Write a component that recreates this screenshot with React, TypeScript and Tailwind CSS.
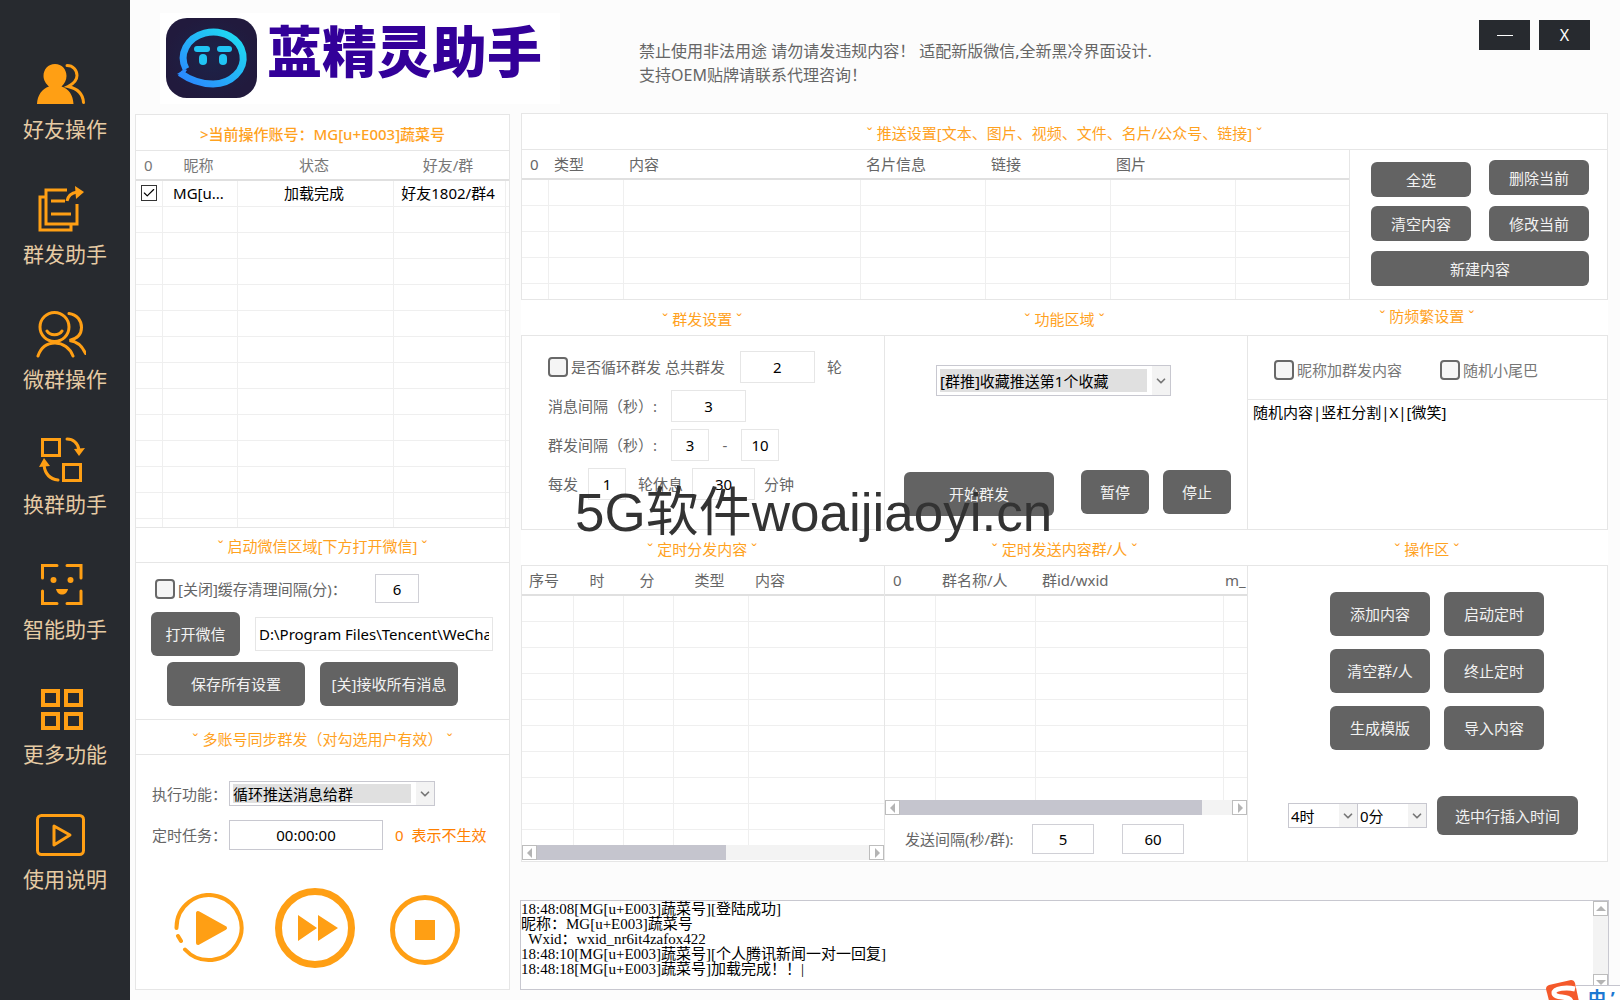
import React from "react";
import { Check, ChevronDown } from "lucide-react";

const NAV_ITEMS = [
  { label: "好友操作", icon: "friends" },
  { label: "群发助手", icon: "share" },
  { label: "微群操作", icon: "group" },
  { label: "换群助手", icon: "swap" },
  { label: "智能助手", icon: "smart" },
  { label: "更多功能", icon: "more" },
  { label: "使用说明", icon: "guide" },
];

const LOG_TEXT = [
  "18:48:08[MG[u+E003]蔬菜号][登陆成功]",
  "昵称：MG[u+E003]蔬菜号",
  "  Wxid：wxid_nr6it4zafox422",
  "18:48:10[MG[u+E003]蔬菜号][个人腾讯新闻一对一回复]",
  "18:48:18[MG[u+E003]蔬菜号]加载完成！！|",
].join("\n");

function NavIcon({ name }: { name: string }) {
  return (
    <svg
      width="50"
      height="48"
      viewBox="0 0 50 48"
      fill="none"
      stroke="#ff9f14"
      strokeWidth="3"
      strokeLinecap="round"
      aria-hidden="true"
    >
      {name === "friends" && (
        <>
          <path
            fill="#ff9f14"
            stroke="none"
            d="M19 3c7 0 11.500 5.500 11.500 12 0 4-2 8-5 10.500C33 28 37 34 37.500 43H1c.5-9 5-15 12-17.500C10 23 7.500 19 7.500 15 7.500 8.500 12 3 19 3Z"
          />
          <path d="M31 4.500c6 0 10 4.500 10 10 0 4.500-3 8-9 11 9 2 15 7 15.500 16" />
        </>
      )}
      {name === "share" && (
        <>
          <path strokeLinecap="butt" d="M31 4H10v34h31V18M10 11H4v33h31v-6M15 15h14M15 28h20" />
          <path strokeLinecap="butt" d="M31 15c1-5 4-8 10-9" />
          <path fill="#ff9f14" stroke="none" d="M39 0l9 6-8 7Z" />
        </>
      )}
      {name === "group" && (
        <>
          <circle cx="18.500" cy="16" r="14.500" />
          <path d="M11 20c3 5 12 5 15 0M33 2.500c8 1 12.500 7 12.500 14 0 6-4 11-12 13 8 1 13 6 16 13M2 45c3-9 9-13 17-13s15 5 18 13" />
        </>
      )}
      {name === "swap" && (
        <>
          <path strokeLinecap="butt" d="M6.500 3.500h17v16h-17ZM27.500 28.500h17v16h-17Z" />
          <path d="M31 3c6 0 11 4 12 11M22 44C14 43 9 38 8 29" />
          <path fill="#ff9f14" stroke="none" d="M38 13l11-1-6 8ZM3 31l5-9 6 8Z" />
        </>
      )}
      {name === "smart" && (
        <>
          <path d="M21 4.500H6.500V17M31 4.500h14V17M21 42.500H6.500V30M31 42.500h14V30" />
          <circle cx="17.500" cy="19" r="3" fill="#ff9f14" stroke="none" />
          <circle cx="34.500" cy="19" r="3" fill="#ff9f14" stroke="none" />
          <path fill="#ff9f14" stroke="none" d="M20 28h12c-1 4-3 5.500-6 5.500S21 32 20 28Z" />
        </>
      )}
      {name === "more" && (
        <path
          strokeWidth="4"
          strokeLinecap="butt"
          d="M7 5h15v14H7ZM30 5h15v14H30ZM7 28h15v14H7ZM30 28h15v14H30Z"
        />
      )}
      {name === "guide" && (
        <>
          <rect x="1.500" y="4.500" width="46" height="39" rx="4" />
          <path strokeLinejoin="round" d="M18 15l16 9-16 10Z" />
        </>
      )}
    </svg>
  );
}

function Logo() {
  return (
    <svg width="91" height="80" viewBox="0 0 91 80" aria-hidden="true">
      <defs>
        <linearGradient id="logo-ring" x1="0" y1="1" x2="1" y2="0">
          <stop offset="0" stopColor="#2b83ff" />
          <stop offset="1" stopColor="#1ee0f0" />
        </linearGradient>
        <radialGradient id="logo-bg">
          <stop offset="0" stopColor="#1c2349" />
          <stop offset="1" stopColor="#211a3d" />
        </radialGradient>
      </defs>
      <rect width="91" height="80" rx="21" fill="url(#logo-bg)" />
      <path
        d="M20 51A30 26 0 1 1 47 66C35 66 24 62 14 55"
        fill="none"
        stroke="url(#logo-ring)"
        strokeWidth="7"
      />
      <path d="M11 56l8-5 2 1-4 6Z" fill="#2b8dff" />
      <g fill="#20c4f4">
        <rect x="28" y="28" width="16" height="6" rx="3" />
        <rect x="51" y="28" width="15" height="6" rx="3" />
        <rect x="33" y="36" width="8" height="11" rx="4" />
        <rect x="53" y="36" width="8" height="11" rx="4" />
      </g>
    </svg>
  );
}

function Btn({ children, className = "" }: { children: React.ReactNode; className?: string }) {
  return (
    <button type="button" className={`rounded-md bg-[#636363] text-[15px] leading-5 text-[#f2f2f2] ${className}`}>
      {children}
    </button>
  );
}

function SectionTitle({ children, className = "" }: { children: React.ReactNode; className?: string }) {
  return (
    <h2 className={`flex h-9 items-center justify-center border-b border-[#e6e6e6] text-[15px] text-[#ffa21f] ${className}`}>
      {children}
    </h2>
  );
}

function TextField({ label, value, className = "" }: { label: string; value: string; className?: string }) {
  return (
    <input
      type="text"
      aria-label={label}
      defaultValue={value}
      className={`border bg-white text-[15px] text-black outline-none ${className}`}
    />
  );
}

function SelectBox({
  label,
  value,
  className = "",
  fieldClass = "",
}: {
  label: string;
  value: string;
  className?: string;
  fieldClass?: string;
}) {
  return (
    <div className={`flex border border-[#c8c8d0] bg-white ${className}`}>
      <select
        aria-label={label}
        className={`min-w-0 flex-1 appearance-none text-[15px] leading-5 text-black outline-none ${fieldClass}`}
      >
        <option>{value}</option>
      </select>
      <span className="pointer-events-none flex w-[18px] items-center justify-center bg-[#f3f3f3]">
        <ChevronDown size={14} strokeWidth={3} color="#777" />
      </span>
    </div>
  );
}

function CheckLine({ label }: { label: string }) {
  return (
    <label className="flex items-center gap-[3px] whitespace-nowrap">
      <input
        type="checkbox"
        className="h-5 w-5 shrink-0 appearance-none rounded border-2 border-[#686868] bg-[#f5f5f5]"
      />
      {label}
    </label>
  );
}

type Column = { title: string; width?: string; align?: string };

function GridTable({
  columns,
  rows,
  firstRow,
  className = "",
}: {
  columns: Column[];
  rows: number;
  firstRow?: React.ReactNode;
  className?: string;
}) {
  return (
    <table className={`w-full table-fixed border-collapse text-[15px] ${className}`}>
      <colgroup>
        {columns.map((c, i) => (
          <col key={i} className={c.width} />
        ))}
      </colgroup>
      <thead>
        <tr className="h-[29px] border-b-2 border-[#e0e0e0]">
          {columns.map((c, i) => (
            <th key={i} className={`p-0 leading-5 font-normal whitespace-nowrap ${c.align ?? "pl-2 text-left"}`}>
              {c.title}
            </th>
          ))}
        </tr>
      </thead>
      <tbody>
        {firstRow}
        {Array.from({ length: rows }, (_, r) => (
          <tr key={r} className="h-[26px] border-b border-[#efefef]">
            {columns.map((_, i) => (
              <td key={i} className="border-r border-[#efefef] p-0 last:border-r-0" />
            ))}
          </tr>
        ))}
      </tbody>
    </table>
  );
}

function Arrow({ d }: { d: string }) {
  return (
    <button type="button" aria-label="滚动" className="flex h-[15px] w-[15px] shrink-0 items-center justify-center border border-[#bdbdbd] bg-white">
      <svg width="10" height="10" viewBox="0 0 10 10" fill="#b4b4b4" aria-hidden="true">
        <path d={d} />
      </svg>
    </button>
  );
}

function HScroll({ thumb }: { thumb: string }) {
  return (
    <div className="flex h-[15px] bg-[#f3f3f3]">
      <Arrow d="M7 0v10L2 5Z" />
      <div className="flex-1">
        <div className={`h-full bg-[#c5c5ce] ${thumb}`} />
      </div>
      <Arrow d="M3 0v10l5-5Z" />
    </div>
  );
}

function Sidebar() {
  return (
    <nav className="flex w-[130px] shrink-0 flex-col gap-[25px] bg-[#272a2f] pt-[61px]">
      {NAV_ITEMS.map((item) => (
        <a key={item.label} href="#" className="flex h-[100px] flex-col">
          <span className="pl-9">
            <NavIcon name={item.icon} />
          </span>
          <span className="mt-1.5 text-center text-[21px] leading-7 text-[#e6cba4]">{item.label}</span>
        </a>
      ))}
    </nav>
  );
}

function Header() {
  return (
    <header className="flex h-[113px] items-start">
      <div className="mt-[13px] ml-[30px] flex h-[91px] w-[400px] items-start bg-white pl-1.5">
        <div className="mt-[5px]">
          <Logo />
        </div>
        <h1 className="ml-2.5 pt-2 text-[55px] leading-[60px] font-black whitespace-nowrap text-[#330099]">
          蓝精灵助手
        </h1>
      </div>
      <p className="mt-[39px] ml-[79px] text-base leading-6 whitespace-nowrap">
        禁止使用非法用途 请勿请发违规内容！ 适配新版微信,全新黑冷界面设计.
        <br />
        支持OEM贴牌请联系代理咨询！
      </p>
      <div className="mt-5 mr-[30px] ml-auto flex gap-[9px] text-base text-white">
        <button type="button" aria-label="最小化" className="flex h-[30px] w-[51px] items-center justify-center bg-[#272a2f]">
          <span className="h-px w-4 bg-white" />
        </button>
        <button type="button" className="h-[30px] w-[51px] bg-[#272a2f]">
          X
        </button>
      </div>
    </header>
  );
}

function AccountPanel() {
  return (
    <section className="mt-px flex w-[375px] shrink-0 flex-col border border-[#e6e6e6] bg-white">
      <SectionTitle className="pt-0.5 font-medium">&gt;当前操作账号：MG[u+E003]蔬菜号</SectionTitle>
      <div className="h-[376px] overflow-hidden">
        <GridTable
          className="text-[#777]"
          rows={13}
          columns={[
            { title: "0", width: "w-[26px]", align: "pl-2 text-left" },
            { title: "昵称", width: "w-[75px]", align: "pr-0.5 text-center" },
            { title: "状态", width: "w-[156px]", align: "pr-0.5 text-center" },
            { title: "好友/群", width: "w-[112px]", align: "pr-0.5 text-center" },
            { title: "" },
          ]}
          firstRow={
            <tr className="h-[26px] border-b border-[#efefef] text-black">
              <td className="border-r border-[#efefef] p-0">
                <span className="ml-[5px] grid h-4 w-4">
                  <input
                    type="checkbox"
                    aria-label="选择账号"
                    defaultChecked
                    className="col-start-1 row-start-1 h-4 w-4 appearance-none border border-[#333] bg-white"
                  />
                  <Check size={14} strokeWidth={2} className="pointer-events-none col-start-1 row-start-1 m-px" />
                </span>
              </td>
              <td className="border-r border-[#efefef] p-0 pr-0.5 text-center leading-5">MG[u...</td>
              <td className="border-r border-[#efefef] p-0 pr-0.5 text-center leading-5">加载完成</td>
              <td className="border-r border-[#efefef] p-0 pr-0.5 text-center leading-5 whitespace-nowrap">好友1802/群4</td>
              <td className="p-0" />
            </tr>
          }
        />
      </div>

      <SectionTitle className="border-t pt-0.5">ˇ 启动微信区域[下方打开微信] ˇ</SectionTitle>
      <div className="h-[156px] pt-[11px]">
        <div className="flex items-center pl-[19px]">
          <CheckLine label="[关闭]缓存清理间隔(分)：" />
          <TextField label="缓存清理间隔" value="6" className="ml-auto h-[29px] w-11 border-[#d0d0d6] text-center" />
          <span className="w-[90px]" />
        </div>
        <div className="mt-[9px] flex items-center pr-4 pl-[15px]">
          <Btn className="h-11 w-[89px]">打开微信</Btn>
          <TextField
            label="微信路径"
            value="D:\Program Files\Tencent\WeChat\WeChat.exe"
            className="ml-[15px] h-[34px] min-w-0 flex-1 border-[#e6e6e6] px-[3px]"
          />
        </div>
        <div className="mt-1.5 flex gap-[15px] pl-[31px]">
          <Btn className="h-11 w-[138px]">保存所有设置</Btn>
          <Btn className="h-11 w-[138px]">[关]接收所有消息</Btn>
        </div>
      </div>

      <SectionTitle className="border-t pt-1">ˇ 多账号同步群发（对勾选用户有效） ˇ</SectionTitle>
      <div className="flex-1 pt-[26px] pl-4">
        <div className="flex items-center">
          <span className="w-[77px]">执行功能：</span>
          <SelectBox
            label="执行功能"
            value="循环推送消息给群"
            className="h-[25px] w-[206px]"
            fieldClass="my-0.5 mr-[5px] ml-[3px] bg-[#e0e0e0]"
          />
        </div>
        <div className="mt-3.5 flex items-center">
          <span className="w-[77px]">定时任务：</span>
          <TextField label="定时任务" value="00:00:00" className="h-[30px] w-[154px] border-[#c8c8d0] text-center" />
          <span className="ml-3 text-[#ff8000]">0&nbsp; 表示不生效</span>
        </div>
        <div className="mt-[38px] flex items-center pl-[22px]">
          <button type="button" aria-label="开始">
            <svg width="70" height="70" viewBox="0 0 70 70" aria-hidden="true">
              <path
                d="M2.500 35a32.500 32.500 0 1 1 8.500 21.500M4 43l3 5"
                fill="none"
                stroke="#ff9f14"
                strokeWidth="4"
                strokeLinecap="round"
              />
              <path
                d="M24 20v30l27-15Z"
                fill="#ff9f14"
                stroke="#ff9f14"
                strokeWidth="4"
                strokeLinejoin="round"
              />
            </svg>
          </button>
          <button type="button" aria-label="快进" className="ml-[31px]">
            <svg width="80" height="80" viewBox="0 0 80 80" aria-hidden="true">
              <circle cx="40" cy="40" r="36.500" fill="none" stroke="#ff9f14" strokeWidth="7" />
              <path d="M23 27v26l19-13ZM43 27v26l20-13Z" fill="#ff9f14" />
            </svg>
          </button>
          <button type="button" aria-label="停止" className="mt-1 ml-[35px]">
            <svg width="70" height="70" viewBox="0 0 70 70" aria-hidden="true">
              <circle cx="35" cy="35" r="32.500" fill="none" stroke="#ff9f14" strokeWidth="5" />
              <path d="M25 25h20v20H25Z" fill="#ff9f14" />
            </svg>
          </button>
        </div>
      </div>
    </section>
  );
}

function PushPanel() {
  return (
    <section className="border border-[#e6e6e6] bg-white">
      <SectionTitle className="pt-0.5">ˇ 推送设置[文本、图片、视频、文件、名片/公众号、链接] ˇ</SectionTitle>
      <div className="flex h-[149px]">
        <div className="flex-1 overflow-hidden">
          <GridTable
            rows={5}
            columns={[
              { title: "0", width: "w-[26px]" },
              { title: "类型", width: "w-[75px]", align: "pl-1.5 text-left" },
              { title: "内容", width: "w-[237px]", align: "pl-1.5 text-left" },
              { title: "名片信息", width: "w-[125px]", align: "pl-1.5 text-left" },
              { title: "链接", width: "w-[125px]", align: "pl-1.5 text-left" },
              { title: "图片", width: "w-[125px]", align: "pl-1.5 text-left" },
              { title: "" },
            ]}
          />
        </div>
        <div className="w-[258px] border-l border-[#e6e6e6] pr-[18px] pl-[21px]">
          <div className="flex justify-between">
            <Btn className="mt-3 h-[35px] w-[100px]">全选</Btn>
            <Btn className="mt-2.5 h-[35px] w-[100px]">删除当前</Btn>
          </div>
          <div className="mt-[9px] flex justify-between">
            <Btn className="h-[35px] w-[100px]">清空内容</Btn>
            <Btn className="h-[35px] w-[100px]">修改当前</Btn>
          </div>
          <Btn className="mt-2.5 h-[35px] w-full">新建内容</Btn>
        </div>
      </div>
    </section>
  );
}

function SettingsRow() {
  return (
    <section className="bg-white">
      <div className="grid grid-cols-3">
        <SectionTitle className="pt-0.5">ˇ 群发设置 ˇ</SectionTitle>
        <SectionTitle className="pt-0.5">ˇ 功能区域 ˇ</SectionTitle>
        <SectionTitle className="pb-1">ˇ 防频繁设置 ˇ</SectionTitle>
      </div>
      <div className="relative grid h-[194px] grid-cols-[363fr_363fr_359fr] border-x border-b border-[#e6e6e6]">
        <div className="flex flex-col gap-[7px] border-r border-[#e6e6e6] pt-[15px] pl-[26px] whitespace-nowrap">
          <div className="flex h-8 items-center">
            <CheckLine label="是否循环群发 总共群发" />
            <TextField label="总共群发" value="2" className="mr-3 ml-[15px] h-8 w-[75px] border-[#e6e6e6] text-center" />
            轮
          </div>
          <div className="flex h-8 items-center">
            <label htmlFor="msg-gap" className="w-[123px]">
              消息间隔（秒）:
            </label>
            <input
              id="msg-gap"
              defaultValue="3"
              className="h-8 w-[75px] border border-[#e6e6e6] text-center text-black outline-none"
            />
          </div>
          <div className="flex h-8 items-center">
            <span className="w-[123px]">群发间隔（秒）:</span>
            <TextField label="群发间隔最小" value="3" className="h-8 w-[38px] border-[#e6e6e6] text-center" />
            <span className="w-8 text-center">-</span>
            <TextField label="群发间隔最大" value="10" className="h-8 w-[38px] border-[#e6e6e6] text-center" />
          </div>
          <div className="flex h-8 items-center">
            每发
            <TextField label="每发轮数" value="1" className="mr-3 ml-2.5 h-8 w-[38px] border-[#e6e6e6] text-center" />
            轮休息
            <TextField label="休息分钟" value="30" className="mx-[9px] h-8 w-[63px] border-[#e6e6e6] text-center" />
            分钟
          </div>
        </div>

        <div className="border-r border-[#e6e6e6] pt-[29px]">
          <SelectBox
            label="功能"
            value="[群推]收藏推送第1个收藏"
            className="ml-[51px] h-[31px] w-[235px]"
            fieldClass="my-[3px] mr-[5px] ml-[3px] bg-[#e0e0e0]"
          />
          <div className="mt-[74px] flex pl-[19px]">
            <Btn className="mt-0.5 h-11 w-[150px]">开始群发</Btn>
            <Btn className="ml-[27px] h-11 w-[68px]">暂停</Btn>
            <Btn className="ml-[14px] h-11 w-[68px]">停止</Btn>
          </div>
        </div>

        <div className="flex flex-col">
          <div className="flex h-16 items-center gap-[38px] border-b border-[#e6e6e6] pt-1 pl-[26px] text-[#777]">
            <CheckLine label="昵称加群发内容" />
            <CheckLine label="随机小尾巴" />
          </div>
          <textarea
            aria-label="随机内容"
            defaultValue="随机内容|竖杠分割|X|[微笑]"
            className="w-full flex-1 resize-none px-[5px] text-[15px] leading-6 text-black outline-none"
          />
        </div>

        <div className="pointer-events-none absolute top-[145px] left-[53px] text-[53px] leading-[60px] whitespace-nowrap text-[#333]">
          <span className="font-['Liberation_Sans','Noto_Sans_CJK_SC',sans-serif]">5G软件woaijiaoyi.cn</span>
        </div>
      </div>
    </section>
  );
}

function TimerRow() {
  return (
    <section className="bg-white">
      <div className="grid grid-cols-3">
        <SectionTitle className="pt-0.5">ˇ 定时分发内容 ˇ</SectionTitle>
        <SectionTitle className="pt-0.5">ˇ 定时发送内容群/人 ˇ</SectionTitle>
        <SectionTitle className="pt-0.5">ˇ 操作区 ˇ</SectionTitle>
      </div>
      <div className="grid h-[296px] grid-cols-[363fr_363fr_359fr] border-x border-b border-[#e6e6e6]">
        <div className="flex min-w-0 flex-col border-r border-[#e6e6e6]">
          <div className="h-[279px] overflow-hidden">
            <GridTable
              rows={10}
              columns={[
                { title: "序号", width: "w-[51px]", align: "pl-[7px] text-left" },
                { title: "时", width: "w-[50px]", align: "pr-0.5 text-center" },
                { title: "分", width: "w-[50px]", align: "pr-0.5 text-center" },
                { title: "类型", width: "w-[75px]", align: "pr-0.5 text-center" },
                { title: "内容", align: "pl-[7px] text-left" },
              ]}
            />
          </div>
          <HScroll thumb="w-[57%]" />
        </div>

        <div className="flex min-w-0 flex-col border-r border-[#e6e6e6]">
          <div className="h-[234px] overflow-hidden">
            <GridTable
              rows={8}
              columns={[
                { title: "0", width: "w-[50px]" },
                { title: "群名称/人", width: "w-[100px]", align: "pl-[7px] text-left" },
                { title: "群id/wxid", width: "w-[188px]", align: "pl-[7px] text-left" },
                { title: "m_", align: "pl-0.5 text-left" },
              ]}
            />
          </div>
          <HScroll thumb="w-[91%]" />
          <div className="flex flex-1 items-center pt-px pl-5">
            <span className="w-[127px]">发送间隔(秒/群):</span>
            <TextField label="发送间隔最小" value="5" className="h-[30px] w-[62px] border-[#d0d0d6] text-center" />
            <TextField label="发送间隔最大" value="60" className="ml-7 h-[30px] w-[62px] border-[#d0d0d6] text-center" />
          </div>
        </div>

        <div className="pt-[26px]">
          <div className="grid grid-cols-[100px_100px] gap-x-3.5 gap-y-[13px] pl-[82px]">
            <Btn className="h-11">添加内容</Btn>
            <Btn className="h-11">启动定时</Btn>
            <Btn className="h-11">清空群/人</Btn>
            <Btn className="h-11">终止定时</Btn>
            <Btn className="h-11">生成模版</Btn>
            <Btn className="h-11">导入内容</Btn>
          </div>
          <div className="mt-[46px] flex items-center pl-10">
            <SelectBox label="小时" value="4时" className="h-[25px] w-[70px]" fieldClass="pl-0.5" />
            <SelectBox label="分钟" value="0分" className="h-[25px] w-[69px] border-l-0" fieldClass="pl-0.5" />
            <Btn className="ml-2.5 h-[39px] w-[141px]">选中行插入时间</Btn>
          </div>
        </div>
      </div>
    </section>
  );
}

function LogPanel() {
  return (
    <section className="-mx-px mt-[38px] flex h-[90px] border border-[#c8c8d0] bg-white">
      <textarea
        aria-label="运行日志"
        readOnly
        defaultValue={LOG_TEXT}
        className="flex-1 resize-none overflow-hidden pt-px font-['Liberation_Serif','Noto_Sans_CJK_SC',serif] text-[15px] leading-[15px] whitespace-pre text-black outline-none"
      />
      <div className="flex w-[15px] flex-col justify-between bg-[#f3f3f3]">
        <Arrow d="M0 7h10L5 2Z" />
        <Arrow d="M0 3h10L5 8Z" />
      </div>
    </section>
  );
}

// input method bar, pinned to the corner of the desktop
function ImeBar() {
  return (
    <div className="absolute right-0 bottom-0 h-5 w-[74px] overflow-hidden">
      <div className="mt-[5px] ml-[30px] h-8 border-t border-[#c5c5ce] bg-white pl-3 text-[18px] leading-6 font-bold whitespace-nowrap text-[#1c78d2]">
        中 ’
      </div>
      <svg width="42" height="40" viewBox="0 0 42 40" className="absolute top-0 left-0" aria-hidden="true">
        <path d="M3 5l22-5q3 0 4 3l6 28-28 5L0 9q0-3 3-4Z" fill="#f4592b" />
        <path d="M29 9c-8-2-21-1-21 4 0 6 17 2 17 9 0 4-8 5-15 4" fill="none" stroke="#fff" strokeWidth="5" />
      </svg>
    </div>
  );
}

export default function App() {
  return (
    <div className="relative flex min-h-screen overflow-hidden bg-[#fcfcfc] font-['Noto_Sans','Noto_Sans_CJK_SC',sans-serif] text-[15px] leading-5 text-[#666]">
      <Sidebar />
      <div className="flex min-w-0 flex-1 flex-col">
        <Header />
        <main className="flex flex-1 gap-[11px] pr-3 pb-2.5 pl-[5px]">
          <AccountPanel />
          <div className="min-w-0 flex-1">
            <PushPanel />
            <SettingsRow />
            <TimerRow />
            <LogPanel />
          </div>
        </main>
      </div>
      <ImeBar />
    </div>
  );
}
